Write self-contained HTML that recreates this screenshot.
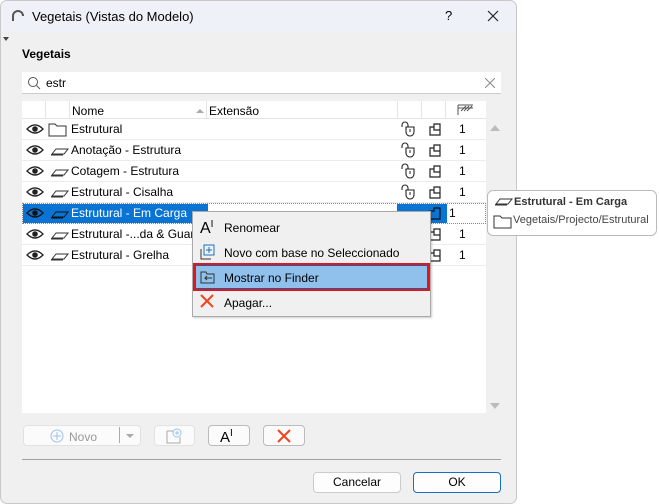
<!DOCTYPE html>
<html><head><style>
*{box-sizing:border-box;margin:0;padding:0}
body{width:659px;height:504px;background:#fff;font-family:"Liberation Sans",sans-serif;font-size:12px;color:#000;position:relative;overflow:hidden}
.dlg{position:absolute;left:0;top:0;width:517px;height:504px;background:#f0f0f0;border:1px solid #c8c8c8;border-radius:7px;overflow:hidden}
.title{position:absolute;left:0;top:0;width:517px;height:31px;background:#eef2f8}
.abs{position:absolute}
.row{position:absolute;left:21px;width:464px;height:21px;border-bottom:1px solid #ececec;background:#fff}
.row .t{position:absolute;left:49px;top:3px;white-space:nowrap}
.row .n{position:absolute;left:437px;top:3px}
.btn{position:absolute;border:1px solid #ccc;border-radius:4px;background:#fbfbfb}
</style></head><body>
<div class="dlg">
<div class="title">
<svg class="abs" style="left:10px;top:9px" width="14" height="12"><path d="M2 11V6a5 5 0 0 1 10 0" fill="none" stroke="#555" stroke-width="2"/></svg>
<div class="abs" style="left:31px;top:8px;font-size:13px">Vegetais (Vistas do Modelo)</div>
<div class="abs" style="left:444px;top:7px;font-size:13px">?</div>
<svg class="abs" style="left:486px;top:9px" width="12" height="12"><path d="M1 1L11 11M11 1L1 11" stroke="#222" stroke-width="1.2"/></svg>
</div>
<div class="abs" style="left:2px;top:36px;width:0;height:0;border-left:3px solid transparent;border-right:3px solid transparent;border-top:4px solid #444"></div>
<div class="abs" style="left:21px;top:46px;font-weight:bold">Vegetais</div>
<div class="abs" style="left:21px;top:71px;width:479px;height:22px;background:#fff;border-bottom:1px solid #ccc"></div>
<svg class="abs" style="left:26px;top:75px" width="14" height="14"><circle cx="6" cy="6" r="4.5" fill="none" stroke="#555"/><path d="M9.5 9.5L13 13" stroke="#555"/></svg>
<div class="abs" style="left:45px;top:75px">estr</div>
<svg class="abs" style="left:484px;top:77px" width="10" height="10"><path d="M0 0L10 10M10 0L0 10" stroke="#888"/></svg>
<div class="abs" style="left:21px;top:100px;width:464px;height:312px;background:#fff"></div>
<div class="abs" style="left:21px;top:100px;width:464px;height:18px;background:#fff;border-bottom:1px solid #e4e4e4"></div>
<div class="abs" style="left:44px;top:100px;width:1px;height:18px;background:#e4e4e4"></div>
<div class="abs" style="left:68px;top:100px;width:1px;height:18px;background:#e4e4e4"></div>
<div class="abs" style="left:205px;top:100px;width:1px;height:18px;background:#e4e4e4"></div>
<div class="abs" style="left:396px;top:100px;width:1px;height:18px;background:#e4e4e4"></div>
<div class="abs" style="left:420px;top:100px;width:1px;height:18px;background:#e4e4e4"></div>
<div class="abs" style="left:444px;top:100px;width:1px;height:18px;background:#e4e4e4"></div>
<div class="abs" style="left:71px;top:103px">Nome</div>
<div class="abs" style="left:195px;top:108px;width:0;height:0;border-left:4px solid transparent;border-right:4px solid transparent;border-bottom:4px solid #aaa"></div>
<div class="abs" style="left:208px;top:103px">Extensão</div>
<svg class="abs" style="left:456px;top:103px" width="17" height="12"><path d="M1 1h15M1 1v10M4 7l5-5M7 7l5-5M10 7l5-5M1 4h15" stroke="#555" fill="none"/></svg>
<div class="abs" style="left:489px;top:124px;border-left:5px solid transparent;border-right:5px solid transparent;border-bottom:6px solid #bbb"></div>
<div class="abs" style="left:489px;top:402px;border-left:5px solid transparent;border-right:5px solid transparent;border-top:6px solid #bbb"></div>

<div class="row" style="top:118px"><span class="t">Estrutural</span><span class="n">1</span></div>
<div class="row" style="top:139px"><span class="t">Anotação - Estrutura</span><span class="n">1</span></div>
<div class="row" style="top:160px"><span class="t">Cotagem - Estrutura</span><span class="n">1</span></div>
<div class="row" style="top:181px"><span class="t">Estrutural - Cisalha</span><span class="n">1</span></div>
<div class="row" style="top:202px;border:1px dotted #888"><div class="abs" style="left:0;top:0;width:185px;height:19px;background:#0a74d4"></div><div class="abs" style="left:374px;top:0;width:50px;height:19px;background:#0a74d4"></div><span class="t" style="color:#fff;left:48px;top:2px">Estrutural - Em Carga</span><span class="n" style="left:426px;top:2px">1</span></div>
<div class="row" style="top:223px"><span class="t">Estrutural -...da &amp; Guarda</span><span class="n">1</span></div>
<div class="row" style="top:244px"><span class="t">Estrutural - Grelha</span><span class="n">1</span></div>

<svg class="abs" style="left:21px;top:118px" width="464" height="147">
<g id="r">
<path d="M5 10q8-8 16 0q-8 8-16 0z" fill="none" stroke="#222" stroke-width="1.3"/><circle cx="13" cy="10" r="2.8" fill="#222"/>
<path d="M380 8V6a3 3 0 0 1 6 0v2h-2v5a4 4 0 0 0 4 4a4 4 0 0 0 4-4v-5h-6" fill="none" stroke="#222" stroke-width="1.1"/><path d="M388 10v3" stroke="#222"/>
<path d="M408 8h4v-3h6v11h-10z M412 8v3h6" fill="none" stroke="#222" stroke-width="1.2"/>
</g>
<use href="#r" y="21"/><use href="#r" y="42"/><use href="#r" y="63"/><use href="#r" y="105"/><use href="#r" y="126"/>
<path d="M27 5h6l2 2h9v10h-17z" fill="none" stroke="#333"/>
<g fill="none" stroke="#333"><path d="M30 35l4-5h12l-4 5zM29 36h12"/><path d="M30 56l4-5h12l-4 5zM29 57h12"/><path d="M30 77l4-5h12l-4 5zM29 78h12"/><path d="M30 119l4-5h12l-4 5zM29 120h12"/><path d="M30 140l4-5h12l-4 5zM29 141h12"/></g>
<g transform="translate(0,84)"><path d="M5 10q8-8 16 0q-8 8-16 0z" fill="none" stroke="#111" stroke-width="1.3"/><circle cx="13" cy="10" r="2.8" fill="#111"/><path d="M30 14l4-5h12l-4 5zM29 15h12" fill="none" stroke="#111"/><path d="M408 8h4v-3h6v11h-10z" fill="none" stroke="#111" stroke-width="1.2"/></g>
</svg>

<div class="btn" style="left:22px;top:424px;width:118px;height:21px;border-color:#e2e2e2"></div>
<svg class="abs" style="left:49px;top:428px" width="14" height="14"><circle cx="7" cy="7" r="6" fill="none" stroke="#9cc2ee"/><path d="M7 3v8M3 7h8" stroke="#9cc2ee"/></svg>
<div class="abs" style="left:68px;top:429px;color:#999">Novo</div>
<div class="abs" style="left:118px;top:426px;width:1px;height:16px;background:#aaa"></div>
<div class="abs" style="left:125px;top:433px;border-left:4px solid transparent;border-right:4px solid transparent;border-top:4px solid #aaa"></div>
<div class="btn" style="left:153px;top:424px;width:41px;height:21px;border-color:#e2e2e2"></div>
<svg class="abs" style="left:165px;top:427px" width="18" height="16"><path d="M1 3v12h13V9M1 3h6" fill="none" stroke="#aaa"/><circle cx="11" cy="5" r="4" fill="none" stroke="#9cc2ee"/><path d="M11 3v4M9 5h4" stroke="#9cc2ee"/></svg>
<div class="btn" style="left:207px;top:424px;width:42px;height:21px;border-color:#bbb"></div>
<div class="abs" style="left:219px;top:427px;font-size:15px">A<span style="font-size:10px;vertical-align:6px">I</span></div>
<div class="btn" style="left:262px;top:424px;width:42px;height:21px;border-color:#bbb"></div>
<svg class="abs" style="left:276px;top:428px" width="14" height="14"><path d="M1 1L13 13M13 1L1 13" stroke="#f0441f" stroke-width="2"/></svg>
<div class="abs" style="left:21px;top:458px;width:479px;height:1px;background:#a0a0a0"></div>
<div class="btn" style="left:312px;top:471px;width:88px;height:21px;background:#fdfdfd;border-color:#ccc;text-align:center;line-height:19px">Cancelar</div>
<div class="btn" style="left:412px;top:471px;width:88px;height:21px;background:#fdfdfd;border-color:#1a6fc4;text-align:center;line-height:19px">OK</div>
</div>

<div class="abs" style="left:487px;top:190px;width:170px;height:46px;background:#fff;border:1px solid #bbb;border-radius:6px"></div>
<svg class="abs" style="left:493px;top:194px" width="20" height="40"><path d="M3 10l4-5h12l-4 5zM2 11h12" fill="none" stroke="#333"/><path d="M1 22h6l2 2h9v10h-17z" fill="none" stroke="#333"/></svg>
<div class="abs" style="left:514px;top:196px;font-weight:bold;color:#333;font-size:11px">Estrutural - Em Carga</div>
<div class="abs" style="left:513px;top:214px;color:#444;font-size:11px">Vegetais/Projecto/Estrutural</div>

<div class="abs" style="left:192px;top:211px;width:239px;height:106px;background:#f0f0f0;border:1px solid #aaa;box-shadow:1px 1px 2px rgba(0,0,0,.2)"></div>
<div class="abs" style="left:200px;top:219px;font-size:16px">A<span style="font-size:10px;vertical-align:6px">I</span></div>
<div class="abs" style="left:224px;top:221px">Renomear</div>
<svg class="abs" style="left:200px;top:244px" width="16" height="16"><path d="M1 5v10h10" fill="none" stroke="#333"/><rect x="4" y="1" width="10" height="10" fill="none" stroke="#1a6fc4"/><path d="M9 3v6M6 6h6" stroke="#1a6fc4"/></svg>
<div class="abs" style="left:224px;top:246px">Novo com base no Seleccionado</div>
<div class="abs" style="left:193px;top:263px;width:237px;height:28px;border:2px solid #e8141c;background:#90c0ec"><div style="position:absolute;left:0;top:0;right:0;bottom:0;border:1px solid #1d5ea0"></div></div>
<svg class="abs" style="left:200px;top:270px" width="16" height="14"><path d="M1 2h5l1 2h7v9h-13z M12 8h-7l2-2M5 8l2 2" fill="none" stroke="#333"/></svg>
<div class="abs" style="left:224px;top:271px">Mostrar no Finder</div>
<svg class="abs" style="left:200px;top:294px" width="14" height="14"><path d="M1 1L13 13M13 1L1 13" stroke="#f0441f" stroke-width="2"/></svg>
<div class="abs" style="left:224px;top:296px">Apagar...</div>
</body></html>
